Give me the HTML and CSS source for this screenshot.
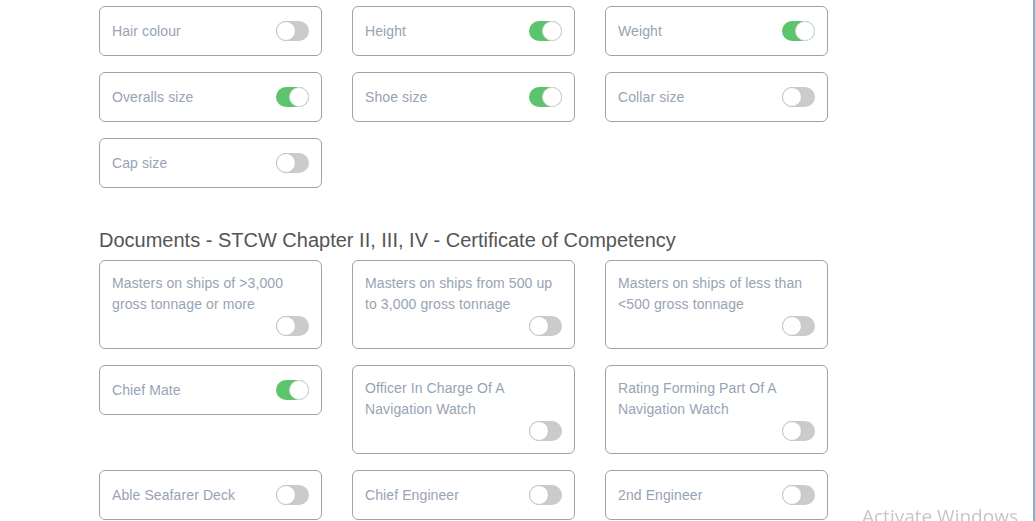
FILE: index.html
```html
<!DOCTYPE html>
<html>
<head>
<meta charset="utf-8">
<link rel="stylesheet" href="styles.css">
</head>
<body>
<div class="page">
  <div class="grid">
    <div class="card"><span class="label">Hair colour</span><span class="toggle"></span></div>
    <div class="card"><span class="label">Height</span><span class="toggle on"></span></div>
    <div class="card"><span class="label">Weight</span><span class="toggle on"></span></div>
    <div class="card"><span class="label">Overalls size</span><span class="toggle on"></span></div>
    <div class="card"><span class="label">Shoe size</span><span class="toggle on"></span></div>
    <div class="card"><span class="label">Collar size</span><span class="toggle"></span></div>
    <div class="card"><span class="label">Cap size</span><span class="toggle"></span></div>
  </div>

  <h2 class="section-title">Documents - STCW Chapter II, III, IV - Certificate of Competency</h2>

  <div class="grid">
    <div class="card stack"><span class="label">Masters on ships of &gt;3,000 gross tonnage or more</span><span class="toggle"></span></div>
    <div class="card stack"><span class="label">Masters on ships from 500 up to 3,000 gross tonnage</span><span class="toggle"></span></div>
    <div class="card stack"><span class="label">Masters on ships of less than &lt;500 gross tonnage</span><span class="toggle"></span></div>
    <div class="card"><span class="label">Chief Mate</span><span class="toggle on"></span></div>
    <div class="card stack"><span class="label">Officer In Charge Of A Navigation Watch</span><span class="toggle"></span></div>
    <div class="card stack"><span class="label">Rating Forming Part Of A Navigation Watch</span><span class="toggle"></span></div>
    <div class="card"><span class="label">Able Seafarer Deck</span><span class="toggle"></span></div>
    <div class="card"><span class="label">Chief Engineer</span><span class="toggle"></span></div>
    <div class="card"><span class="label">2nd Engineer</span><span class="toggle"></span></div>
  </div>
</div>
<div class="watermark">Activate Windows</div>
<div class="window-edge"></div>
</body>
</html>
```

FILE: styles.css
```css
html, body {
  margin: 0;
  padding: 0;
  background: #ffffff;
  overflow: hidden;
}

body {
  font-family: "Liberation Sans", Arial, sans-serif;
}

.page {
  padding: 6px 0 0 99px;
}

.grid {
  display: grid;
  grid-template-columns: 223px 223px 223px;
  column-gap: 30px;
  row-gap: 16px;
  align-items: start;
}

.card {
  box-sizing: border-box;
  height: 50px;
  border: 1px solid #a3a3a3;
  border-radius: 6px;
  padding: 0 12px;
  display: flex;
  align-items: center;
  justify-content: space-between;
}

.card.stack {
  height: 89px;
  flex-direction: column;
  align-items: stretch;
  justify-content: flex-start;
  padding-top: 12px;
}

.label {
  font-size: 14px;
  line-height: 21px;
  color: #98a3b4;
  letter-spacing: 0.1px;
}

.card.stack .label {
  padding-right: 6px;
}

.card.stack .toggle {
  align-self: flex-end;
  margin-top: 1px;
}

.toggle {
  position: relative;
  flex: none;
  width: 33px;
  height: 20px;
  border-radius: 10px;
  background: #cbcbcb;
  box-sizing: border-box;
}

.toggle::after {
  content: "";
  position: absolute;
  top: 0;
  left: 0;
  width: 20px;
  height: 20px;
  box-sizing: border-box;
  border-radius: 50%;
  background: #ffffff;
  border: 1px solid #c4c4c4;
}

.toggle.on {
  background: #5cc46d;
}

.toggle.on::after {
  left: 13px;
  border-color: #d6d6d6;
}

.section-title {
  margin: 40px 0 8px 0;
  font-size: 20px;
  line-height: 24px;
  font-weight: normal;
  color: #555555;
}

.watermark {
  position: fixed;
  left: 862px;
  top: 504px;
  font-family: "Open Sans", "DejaVu Sans", sans-serif;
  font-size: 19px;
  line-height: 24px;
  color: #c6c6c6;
  white-space: nowrap;
}

.window-edge {
  position: fixed;
  top: 0;
  right: 0;
  width: 2px;
  height: 100%;
  background: #7ab6d3;
}
```
